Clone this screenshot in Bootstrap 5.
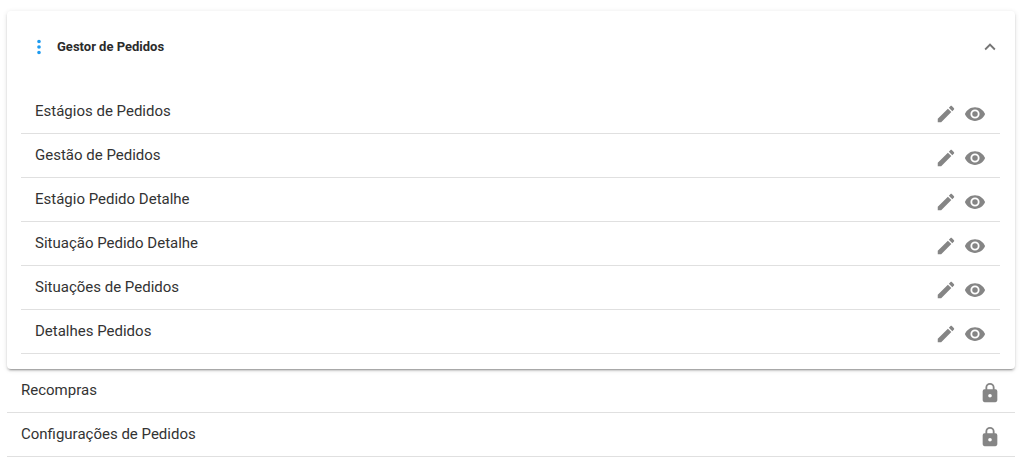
<!DOCTYPE html>
<html lang="pt-BR">
<head>
<meta charset="utf-8">
<meta name="viewport" content="width=device-width, initial-scale=1">
<title>Gestor de Pedidos</title>
<link rel="stylesheet" href="https://cdn.jsdelivr.net/npm/bootstrap@5.3.0/dist/css/bootstrap.min.css">
<style>
body { font-family: Roboto, "Liberation Sans", sans-serif; font-size: 15px; line-height: 20px; color: #333; background: #fff; }
.page { padding: 11px 7px 8px; }
.panel { border-radius: 4px; background: #fff; box-shadow: 0 3px 1px -2px rgba(0,0,0,.2), 0 2px 2px 0 rgba(0,0,0,.14), 0 1px 5px 0 rgba(0,0,0,.12); }
.panel-head { height: 72px; padding: 0 14px 0 21px; gap: 7px; }
.panel-title { font-size: 13px; line-height: 20px; font-weight: 700; color: #2b2b2b; }
.panel-body { padding: 7px 15px 15px 14px; }
.entry { height: 44px; border-bottom: 1px solid #e0e0e0; padding: 0 14px; }
.entry-name { padding-top: 11px; }
.entry-actions { padding-top: 13px; gap: 7px; }
.icon-btn { display: flex; padding: 0; border: 0; background: none; color: #858585; }
.icon-btn svg { width: 22px; height: 22px; fill: currentColor; }
.icon-btn.menu { color: #1e9bf0; }
.icon-btn.toggle { color: #757575; }
</style>
</head>
<body>
<svg class="d-none" xmlns="http://www.w3.org/2000/svg">
<symbol id="dots" viewBox="0 0 24 24"><path d="M12 16a2 2 0 1 1 0 4 2 2 0 0 1 0-4m0-6a2 2 0 1 1 0 4 2 2 0 0 1 0-4m0-6a2 2 0 1 1 0 4 2 2 0 0 1 0-4z"/></symbol>
<symbol id="chevron" viewBox="0 0 24 24"><path d="M7.410 15.410L12 10.830l4.590 4.580L18 14l-6-6-6 6z"/></symbol>
<symbol id="pencil" viewBox="0 0 24 24"><path d="M20.710 7.040c.39-.39.39-1.040 0-1.410l-2.340-2.340c-.37-.39-1.020-.39-1.410 0l-1.840 1.830 3.750 3.750M3 17.250V21h3.750L17.810 9.930l-3.750-3.750L3 17.250z"/></symbol>
<symbol id="eye" viewBox="0 0 24 24"><path d="M12 9a3 3 0 1 0 0 6 3 3 0 0 0 0-6m0 8a5 5 0 1 1 0-10 5 5 0 0 1 0 10m0-12.500C7 4.500 2.730 7.610 1 12c1.730 4.390 6 7.500 11 7.500s9.270-3.110 11-7.500c-1.730-4.390-6-7.500-11-7.500z"/></symbol>
<symbol id="lock" viewBox="0 0 24 24"><path d="M12 17a2 2 0 1 0 0-4 2 2 0 0 0 0 4m6-9a2 2 0 0 1 2 2v10a2 2 0 0 1-2 2H6a2 2 0 0 1-2-2V10a2 2 0 0 1 2-2h1V6a5 5 0 0 1 10 0v2h1m-6-5a3 3 0 0 0-3 3v2h6V6a3 3 0 0 0-3-3z"/></symbol>
</svg>
<main class="page">
<section class="panel">
<header class="panel-head d-flex align-items-center">
<button class="icon-btn menu" type="button" aria-label="Opções"><svg><use href="#dots"/></svg></button>
<h1 class="panel-title mb-0 me-auto">Gestor de Pedidos</h1>
<button class="icon-btn toggle" type="button" aria-label="Recolher" aria-expanded="true"><svg><use href="#chevron"/></svg></button>
</header>
<ul class="panel-body list-unstyled mb-0">
<li class="entry d-flex align-items-start justify-content-between"><span class="entry-name">Estágios de Pedidos</span><div class="entry-actions d-flex"><button class="icon-btn" type="button" aria-label="Editar"><svg><use href="#pencil"/></svg></button><button class="icon-btn" type="button" aria-label="Visualizar"><svg><use href="#eye"/></svg></button></div></li>
<li class="entry d-flex align-items-start justify-content-between"><span class="entry-name">Gestão de Pedidos</span><div class="entry-actions d-flex"><button class="icon-btn" type="button" aria-label="Editar"><svg><use href="#pencil"/></svg></button><button class="icon-btn" type="button" aria-label="Visualizar"><svg><use href="#eye"/></svg></button></div></li>
<li class="entry d-flex align-items-start justify-content-between"><span class="entry-name">Estágio Pedido Detalhe</span><div class="entry-actions d-flex"><button class="icon-btn" type="button" aria-label="Editar"><svg><use href="#pencil"/></svg></button><button class="icon-btn" type="button" aria-label="Visualizar"><svg><use href="#eye"/></svg></button></div></li>
<li class="entry d-flex align-items-start justify-content-between"><span class="entry-name">Situação Pedido Detalhe</span><div class="entry-actions d-flex"><button class="icon-btn" type="button" aria-label="Editar"><svg><use href="#pencil"/></svg></button><button class="icon-btn" type="button" aria-label="Visualizar"><svg><use href="#eye"/></svg></button></div></li>
<li class="entry d-flex align-items-start justify-content-between"><span class="entry-name">Situações de Pedidos</span><div class="entry-actions d-flex"><button class="icon-btn" type="button" aria-label="Editar"><svg><use href="#pencil"/></svg></button><button class="icon-btn" type="button" aria-label="Visualizar"><svg><use href="#eye"/></svg></button></div></li>
<li class="entry d-flex align-items-start justify-content-between"><span class="entry-name">Detalhes Pedidos</span><div class="entry-actions d-flex"><button class="icon-btn" type="button" aria-label="Editar"><svg><use href="#pencil"/></svg></button><button class="icon-btn" type="button" aria-label="Visualizar"><svg><use href="#eye"/></svg></button></div></li>
</ul>
</section>
<ul class="list-unstyled mb-0">
<li class="entry d-flex align-items-start justify-content-between"><span class="entry-name">Recompras</span><div class="entry-actions"><button class="icon-btn" type="button" aria-label="Bloqueado"><svg><use href="#lock"/></svg></button></div></li>
<li class="entry d-flex align-items-start justify-content-between"><span class="entry-name">Configurações de Pedidos</span><div class="entry-actions"><button class="icon-btn" type="button" aria-label="Bloqueado"><svg><use href="#lock"/></svg></button></div></li>
</ul>
</main>
<script src="https://cdn.jsdelivr.net/npm/bootstrap@5.3.0/dist/js/bootstrap.bundle.min.js"></script>
</body>
</html>
